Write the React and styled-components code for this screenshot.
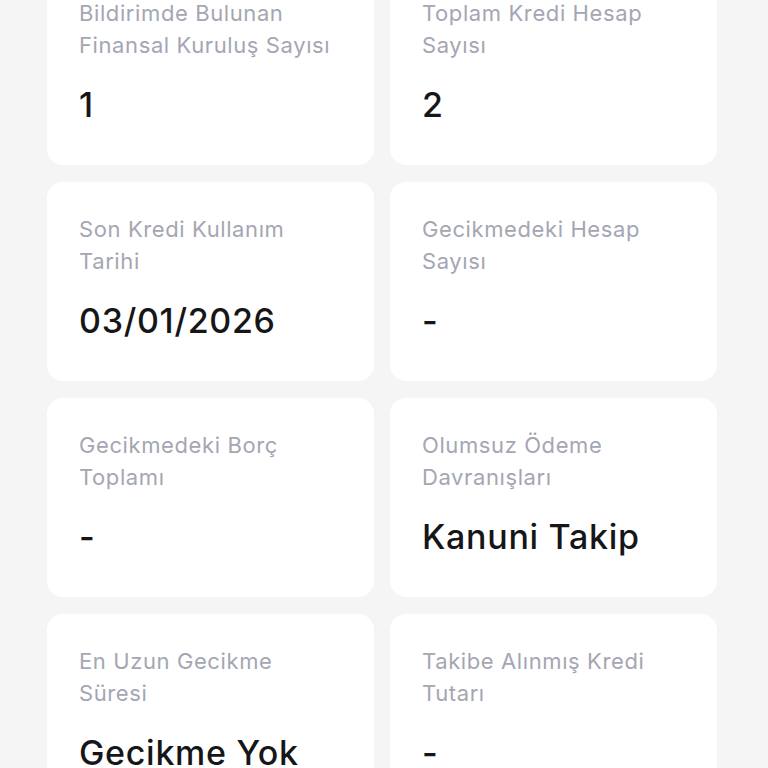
import React from "react";
import styled, { createGlobalStyle } from "styled-components";

const Global = createGlobalStyle`
  html, body { margin: 0; padding: 0; background: #f5f5f6; }
  body { font-family: Inter, "Noto Sans", sans-serif; overflow: hidden; }
`;

const Page = styled.div`
  height: 768px;
  overflow: hidden;
  background: #f5f5f6;
`;

const Grid = styled.div`
  display: grid;
  grid-template-columns: 327px 327px;
  column-gap: 16px;
  row-gap: 17px;
  margin: -34px 0 0 47px;
`;

const Card = styled.div`
  background: #ffffff;
  border-radius: 16px;
  height: 199px;
  box-sizing: border-box;
  padding: 31px 32px 0 32px;
  display: flex;
  flex-direction: column;
`;

const Label = styled.div`
  font-size: 22px;
  line-height: 32px;
  color: #a5a6b3;
  font-weight: 400;
  letter-spacing: 0.6px;
  height: 64px;
`;

const Value = styled.div`
  margin-top: 22px;
  font-size: 34px;
  line-height: 44px;
  font-weight: 500;
  color: #161618;
  letter-spacing: 0.7px;
`;

const items = [
  ["Bildirimde Bulunan Finansal Kuruluş Sayısı", "1"],
  ["Toplam Kredi Hesap Sayısı", "2"],
  ["Son Kredi Kullanım Tarihi", "03/01/2026"],
  ["Gecikmedeki Hesap Sayısı", "-"],
  ["Gecikmedeki Borç Toplamı", "-"],
  ["Olumsuz Ödeme Davranışları", "Kanuni Takip"],
  ["En Uzun Gecikme Süresi", "Gecikme Yok"],
  ["Takibe Alınmış Kredi Tutarı", "-"],
];

export default function App() {
  return (
    <Page>
      <Global />
      <Grid>
        {items.map(([l, v]) => (
          <Card key={l}>
            <Label>{l}</Label>
            <Value>{v}</Value>
          </Card>
        ))}
      </Grid>
    </Page>
  );
}
